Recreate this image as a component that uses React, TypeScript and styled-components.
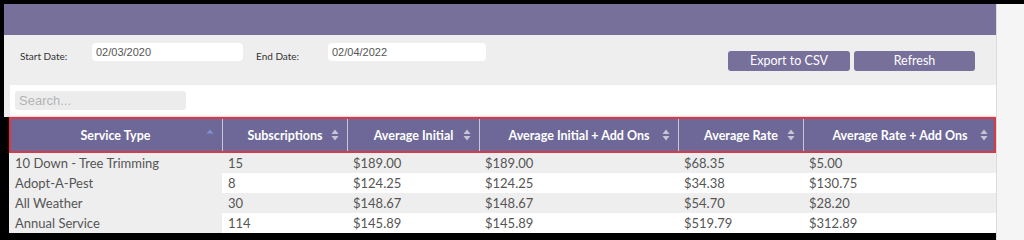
import React from 'react'
import styled, { createGlobalStyle } from 'styled-components'

const GlobalStyle = createGlobalStyle`
  html, body {
    margin: 0;
    padding: 0;
    background: #000;
    overflow: hidden;
  }
  #root {
    width: 1024px;
    height: 240px;
  }
`

const Frame = styled.div`
  display: flex;
  padding-top: 4px;
  height: 236px;
  font-family: Lato, 'Open Sans', sans-serif;
`

const Main = styled.div`
  margin-left: 4px;
  width: 992px;
  display: flex;
  flex-direction: column;
  background: #eeeeee;
`

const SideStrip = styled.div`
  flex: 1;
  background: #f5f5f5;
  border-left: 1px solid #dcdcdc;
`

const TitleBar = styled.div`
  height: 31px;
  background: #77709b;
`

const Filters = styled.div`
  height: 50px;
  box-sizing: border-box;
  padding: 8px 21px 0 16px;
  display: flex;
  align-items: flex-start;
  background: #eeeeee;
`

const Label = styled.label`
  width: 72px;
  padding-top: 4px;
  line-height: 18px;
  font-size: 10px;
  color: #333;
`

const DateInput = styled.div<{ w: number }>`
  width: ${p => p.w}px;
  height: 18px;
  box-sizing: border-box;
  padding: 0 4px;
  margin-right: 13px;
  background: #fff;
  border-radius: 4px;
  font-family: 'Liberation Sans', Arial, sans-serif;
  font-size: 11px;
  line-height: 18px;
  color: #555;
`

const Buttons = styled.div`
  margin-left: auto;
  margin-top: 8px;
  display: flex;
  gap: 4px;
`

const Button = styled.button<{ w: number }>`
  width: ${p => p.w}px;
  height: 20px;
  padding: 0;
  border: none;
  border-radius: 3px;
  background: #77709b;
  color: #fff;
  font-family: Lato, 'Open Sans', sans-serif;
  font-size: 12.5px;
  line-height: 20px;
`

const SearchRow = styled.div`
  padding-left: 6px;
  background: #eeeeee;
`

const SearchBox = styled.div`
  height: 32px;
  box-sizing: border-box;
  padding: 6px 0 0 5px;
  background: #fff;
`

const SearchInput = styled.div`
  width: 171px;
  height: 19px;
  box-sizing: border-box;
  padding-left: 4px;
  border-radius: 3px;
  background: #ececec;
  font-family: 'Liberation Sans', Arial, sans-serif;
  font-size: 13px;
  line-height: 19px;
  color: #b4b4b4;
`

const TableWrap = styled.div`
  flex: 1;
  padding-left: 5px;
  background: #000;
`

const cols = '213px 125px 132px 199px 125px 193px'

const HeadRow = styled.div`
  display: grid;
  grid-template-columns: ${cols};
  height: 36px;
  background: #6e6898;
  box-shadow: inset 0 0 0 2px #d63c48, 0 0 2px rgba(214, 60, 72, 0.6);
`

const HeadCell = styled.div<{ first?: boolean }>`
  position: relative;
  display: flex;
  align-items: center;
  justify-content: center;
  border-left: ${p => (p.first ? 'none' : '1px solid #c9c5dc')};
  margin: 2px 0;
  color: #fff;
  font-weight: 700;
  font-size: 12.5px;
`

const SortIcon = styled.svg`
  position: absolute;
  right: 8px;
  top: 50%;
  transform: translateY(-50%);
`

const Row = styled.div`
  display: grid;
  grid-template-columns: ${cols};
  height: 20px;
`

const Cell = styled.div<{ shade: boolean }>`
  padding-left: 6px;
  background: ${p => (p.shade ? '#eeeeee' : '#ffffff')};
  color: #555;
  font-size: 13px;
  line-height: 20px;
  white-space: nowrap;
`

const Sort = ({ asc }: { asc?: boolean }) => (
  <SortIcon width="8" height="14" viewBox="0 0 8 14">
    {asc ? (
      <path d="M0.5 5.5 L4 1.5 L7.5 5.5 Z" fill="#7e8fd6" />
    ) : (
      <>
        <path d="M0.5 6 L4 1.5 L7.5 6 Z" fill="#c7c4d6" />
        <path d="M0.5 8 L4 12.5 L7.5 8 Z" fill="#c7c4d6" />
      </>
    )}
  </SortIcon>
)

const headers = [
  'Service Type',
  'Subscriptions',
  'Average Initial',
  'Average Initial + Add Ons',
  'Average Rate',
  'Average Rate + Add Ons',
]

const rows = [
  ['10 Down - Tree Trimming', '15', '$189.00', '$189.00', '$68.35', '$5.00'],
  ['Adopt-A-Pest', '8', '$124.25', '$124.25', '$34.38', '$130.75'],
  ['All Weather', '30', '$148.67', '$148.67', '$54.70', '$28.20'],
  ['Annual Service', '114', '$145.89', '$145.89', '$519.79', '$312.89'],
]

export default function App() {
  return (
    <>
      <GlobalStyle />
      <Frame>
        <Main>
          <TitleBar />
          <Filters>
            <Label>Start Date:</Label>
            <DateInput w={151}>02/03/2020</DateInput>
            <Label>End Date:</Label>
            <DateInput w={158}>02/04/2022</DateInput>
            <Buttons>
              <Button w={122}>Export to CSV</Button>
              <Button w={121}>Refresh</Button>
            </Buttons>
          </Filters>
          <SearchRow>
            <SearchBox>
              <SearchInput>Search...</SearchInput>
            </SearchBox>
          </SearchRow>
          <TableWrap>
            <HeadRow>
              {headers.map((h, i) => (
                <HeadCell key={h} first={i === 0}>
                  {h}
                  <Sort asc={i === 0} />
                </HeadCell>
              ))}
            </HeadRow>
            {rows.map((r, ri) => (
              <Row key={r[0]}>
                {r.map((c, ci) => (
                  <Cell key={ci} shade={ci === 0 || ri % 2 === 0}>
                    {c}
                  </Cell>
                ))}
              </Row>
            ))}
          </TableWrap>
        </Main>
        <SideStrip />
      </Frame>
    </>
  )
}
